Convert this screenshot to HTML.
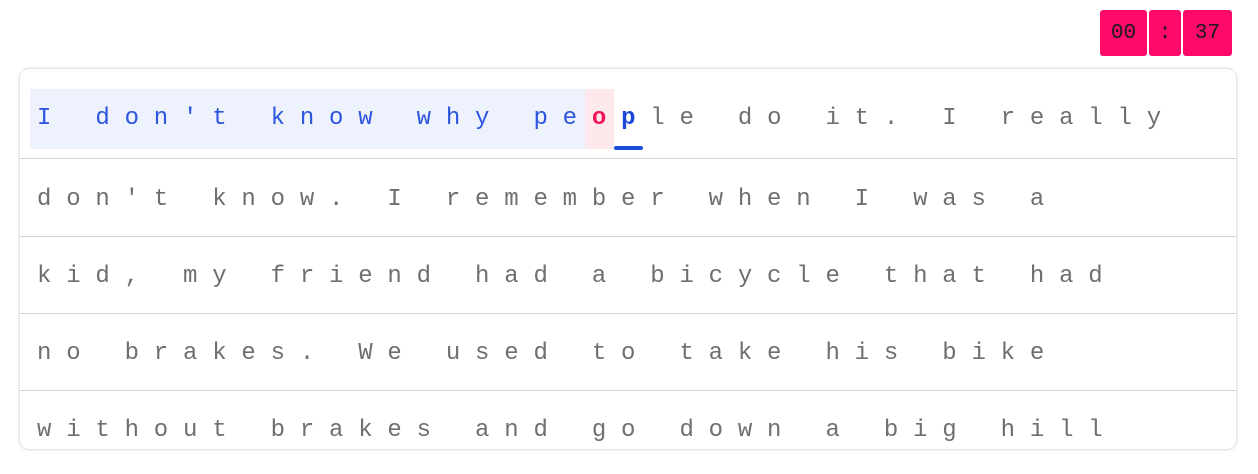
<!DOCTYPE html>
<html><head><style>
body{margin:0;background:#fff;width:1258px;height:474px;position:relative;overflow:hidden;font-family:"Liberation Mono",monospace;}
.t{position:absolute;top:10px;height:46px;background:#fd0a6a;border-radius:3px;color:#1a1a1a;font-size:21px;line-height:48px;text-align:center;}
.card{position:absolute;left:20px;top:69px;width:1216px;height:380px;border-radius:9px;box-shadow:0 0 3px rgba(0,0,0,.25);overflow:hidden;background:#fff;}
.row{position:absolute;left:0;width:1216px;height:77px;border-bottom:1px solid #d4d4d4;}
.txt{position:absolute;left:17px;font-size:24px;letter-spacing:14.8px;color:#6f6f6f;white-space:pre;line-height:60px;top:10px;}
.txt span{display:inline-block;}
.done{background:#eef2fd;color:#2d55dd;padding-left:7px;margin-right:-7px;}
.err{background:#fde8ec;color:#f0145a;font-weight:bold;padding-left:7px;letter-spacing:7.8px;position:relative;}
.cur{color:#1a47d6;font-weight:bold;position:relative;padding-left:7px;letter-spacing:7.8px;}
.cur:after{content:"";position:absolute;left:0;width:29px;bottom:-1px;height:4px;border-radius:2px;background:#1d4ed8;}
.rest{padding-left:7px;}
</style></head><body>
<div class="t" style="left:1100px;width:47px">00</div>
<div class="t" style="left:1149px;width:32px">:</div>
<div class="t" style="left:1183px;width:49px">37</div>
<div class="card">
<div class="row" style="top:0;height:89px"><div class="txt" style="top:20px;left:10px"><span class="done">I don't know why pe</span><span class="err">o</span><span class="cur">p</span><span class="rest">le do it. I really</span></div></div>
<div class="row" style="top:90px"><div class="txt" style="top:11px">don't know. I remember when I was a</div></div>
<div class="row" style="top:167px"><div class="txt" style="top:11px">kid, my friend had a bicycle that had</div></div>
<div class="row" style="top:244px"><div class="txt" style="top:11px">no brakes. We used to take his bike</div></div>
<div class="row" style="top:321px;border:0"><div class="txt" style="top:11px">without brakes and go down a big hill</div></div>
</div>
</body></html>
